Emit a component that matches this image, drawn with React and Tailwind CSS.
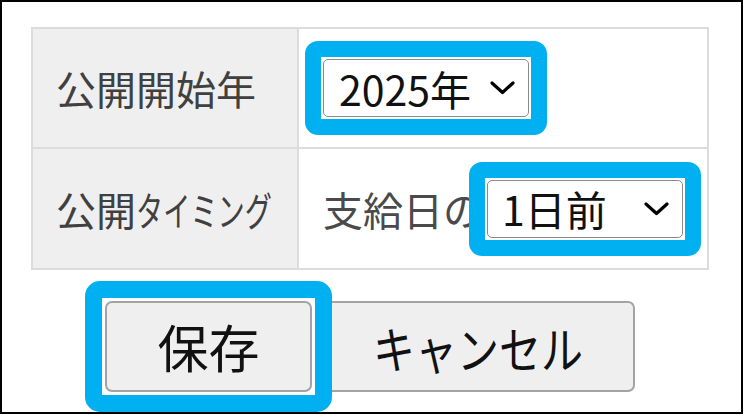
import React from "react";

const font = "font-['Noto_Sans_CJK_JP','Noto_Sans',sans-serif]";

function Chevron() {
  return (
    <svg width="25" height="14" viewBox="0 0 25 14" fill="none">
      <polyline points="2,2 12.5,11.5 23,2" stroke="#000" strokeWidth="3.2" strokeLinecap="round" strokeLinejoin="round" />
    </svg>
  );
}

// fake select box, drawn like the native control
function SelectBox({ value, width, padLeft }) {
  return (
    <div
      className={`flex h-[58px] items-center justify-between rounded-[5px] border-[1.5px] border-[#8a8a8a] bg-white pr-[13px] ${width} ${padLeft}`}
    >
      <span className="text-[41px] leading-none text-[#111]">{value}</span>
      <Chevron />
    </div>
  );
}

export default function App() {
  return (
    <div className={`h-[414px] w-[743px] border-2 border-black bg-white pl-[29px] pt-[25px] ${font}`}>
      {/* Settings table */}
      <div className="w-[678px] border-2 border-[#dcdcdc]">
        <div className="flex h-[120px] border-b-2 border-[#dcdcdc]">
          <div className="flex w-[266px] items-center border-r-2 border-[#dcdcdc] bg-[#efefef] pl-[23px] text-[40px] leading-none text-[#404040]">
            公開開始年
          </div>
          <div className="flex flex-1 items-center pl-[24px]">
            <div className="-m-[18px] rounded-[13px] border-[16px] border-[#00b0f0] bg-white p-[2px]">
              <SelectBox value="2025年" width="w-[206px]" padLeft="pl-[15px]" />
            </div>
          </div>
        </div>
        <div className="flex h-[119px]">
          <div className="flex w-[266px] items-center overflow-hidden whitespace-nowrap border-r-2 border-[#dcdcdc] bg-[#efefef] pl-[23px] text-[40px] leading-none text-[#404040]">
            公開
            {/* narrow kana, like Meiryo UI */}
            <span className="inline-block origin-left scale-x-[0.68]">タイミング</span>
          </div>
          <div className="flex flex-1 items-center pl-[24px]">
            <span className="whitespace-nowrap text-[40px] leading-none text-[#4a4a4a]">支給日の</span>
            <div className="-my-[18px] ml-[-14px] -mr-[18px] rounded-[13px] border-[16px] border-[#00b0f0] bg-white p-[2px]">
              <SelectBox value="1日前" width="w-[196px]" padLeft="pl-[14px]" />
            </div>
          </div>
        </div>
      </div>

      {/* Actions */}
      <div className="mt-[31px] flex w-[678px] justify-center gap-[9px]">
        <div className="relative z-10 -m-[20px] rounded-[15px] border-[17px] border-[#00b0f0] bg-white p-[3px]">
          <button className="flex h-[91px] w-[207px] items-center justify-center rounded-[7px] border-2 border-[#a3a3a3] bg-[#efefef] text-[51px] leading-none text-[#111]">
            保存
          </button>
        </div>
        <button className="flex h-[91px] w-[314px] items-center justify-center whitespace-nowrap rounded-[7px] border-2 border-[#a3a3a3] bg-[#efefef] text-[50px] leading-none text-[#111]">
          <span className="inline-block scale-x-[0.84]">キャンセル</span>
        </button>
      </div>
    </div>
  );
}
